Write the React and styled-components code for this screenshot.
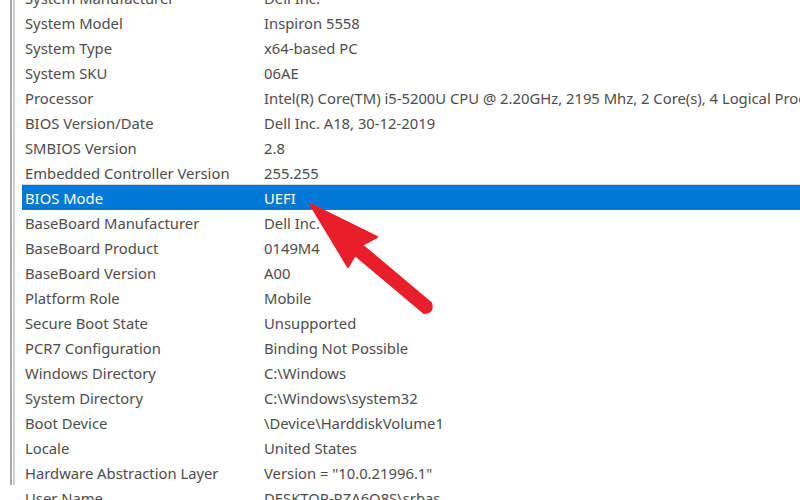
import React from "react";
import styled, { createGlobalStyle } from "styled-components";

const Global = createGlobalStyle`
  html, body { margin: 0; padding: 0; background: #fff; overflow: hidden; }
  body { width: 800px; height: 500px; }
`;

const Page = styled.div`
  position: relative;
  width: 800px;
  height: 500px;
  overflow: hidden;
  background: #fff;
  font-family: "Noto Sans", "Open Sans", sans-serif;
`;

const OuterFrame = styled.div`
  margin-left: 10px;
  height: 100%;
  border-left: 2px solid #a8a8a8;
  padding-left: 1px;
`;

const InnerFrame = styled.div`
  height: 100%;
  border-left: 2px solid #cfcfcf;
  padding-left: 7px;
`;

const List = styled.div`
  display: flex;
  flex-direction: column;
  margin-top: -15px;
`;

const Row = styled.div`
  display: grid;
  grid-template-columns: 239px 1fr;
  height: 25px;
  align-items: center;
  padding-left: 3px;
  white-space: nowrap;
  font-size: 14.8px;
  color: ${(p) => (p.$selected ? "#ffffff" : "#4d4d4d")};
  background: ${(p) => (p.$selected ? "#0078d7" : "transparent")};
  box-shadow: ${(p) => (p.$selected ? "0 -1px 0 #d6d6d6" : "none")};
`;

const Cell = styled.span`
  overflow: hidden;
`;

const Arrow = styled.svg`
  position: absolute;
  left: 0;
  top: 0;
  pointer-events: none;
`;

const rows = [
  ["System Manufacturer", "Dell Inc."],
  ["System Model", "Inspiron 5558"],
  ["System Type", "x64-based PC"],
  ["System SKU", "06AE"],
  ["Processor", "Intel(R) Core(TM) i5-5200U CPU @ 2.20GHz, 2195 Mhz, 2 Core(s), 4 Logical Processor(s)"],
  ["BIOS Version/Date", "Dell Inc. A18, 30-12-2019"],
  ["SMBIOS Version", "2.8"],
  ["Embedded Controller Version", "255.255"],
  ["BIOS Mode", "UEFI", true],
  ["BaseBoard Manufacturer", "Dell Inc."],
  ["BaseBoard Product", "0149M4"],
  ["BaseBoard Version", "A00"],
  ["Platform Role", "Mobile"],
  ["Secure Boot State", "Unsupported"],
  ["PCR7 Configuration", "Binding Not Possible"],
  ["Windows Directory", "C:\\Windows"],
  ["System Directory", "C:\\Windows\\system32"],
  ["Boot Device", "\\Device\\HarddiskVolume1"],
  ["Locale", "United States"],
  ["Hardware Abstraction Layer", "Version = \"10.0.21996.1\""],
  ["User Name", "DESKTOP-RZA6Q8S\\srbas"],
];

export default function App() {
  return (
    <Page>
      <Global />
      <OuterFrame>
        <InnerFrame>
          <List>
            {rows.map(([k, v, sel]) => (
              <Row key={k} $selected={sel}>
                <Cell>{k}</Cell>
                <Cell>{v}</Cell>
              </Row>
            ))}
          </List>
        </InnerFrame>
      </OuterFrame>
      <Arrow width="800" height="500" viewBox="0 0 800 500">
        <path
          d="M310 204 L377 237 L362 245 L431 303 Q434 313 424 313 L355 255 L348 267 Z"
          fill="#e81e2a"
          stroke="#e81e2a"
          strokeWidth="2"
          strokeLinejoin="round"
        />
      </Arrow>
    </Page>
  );
}
